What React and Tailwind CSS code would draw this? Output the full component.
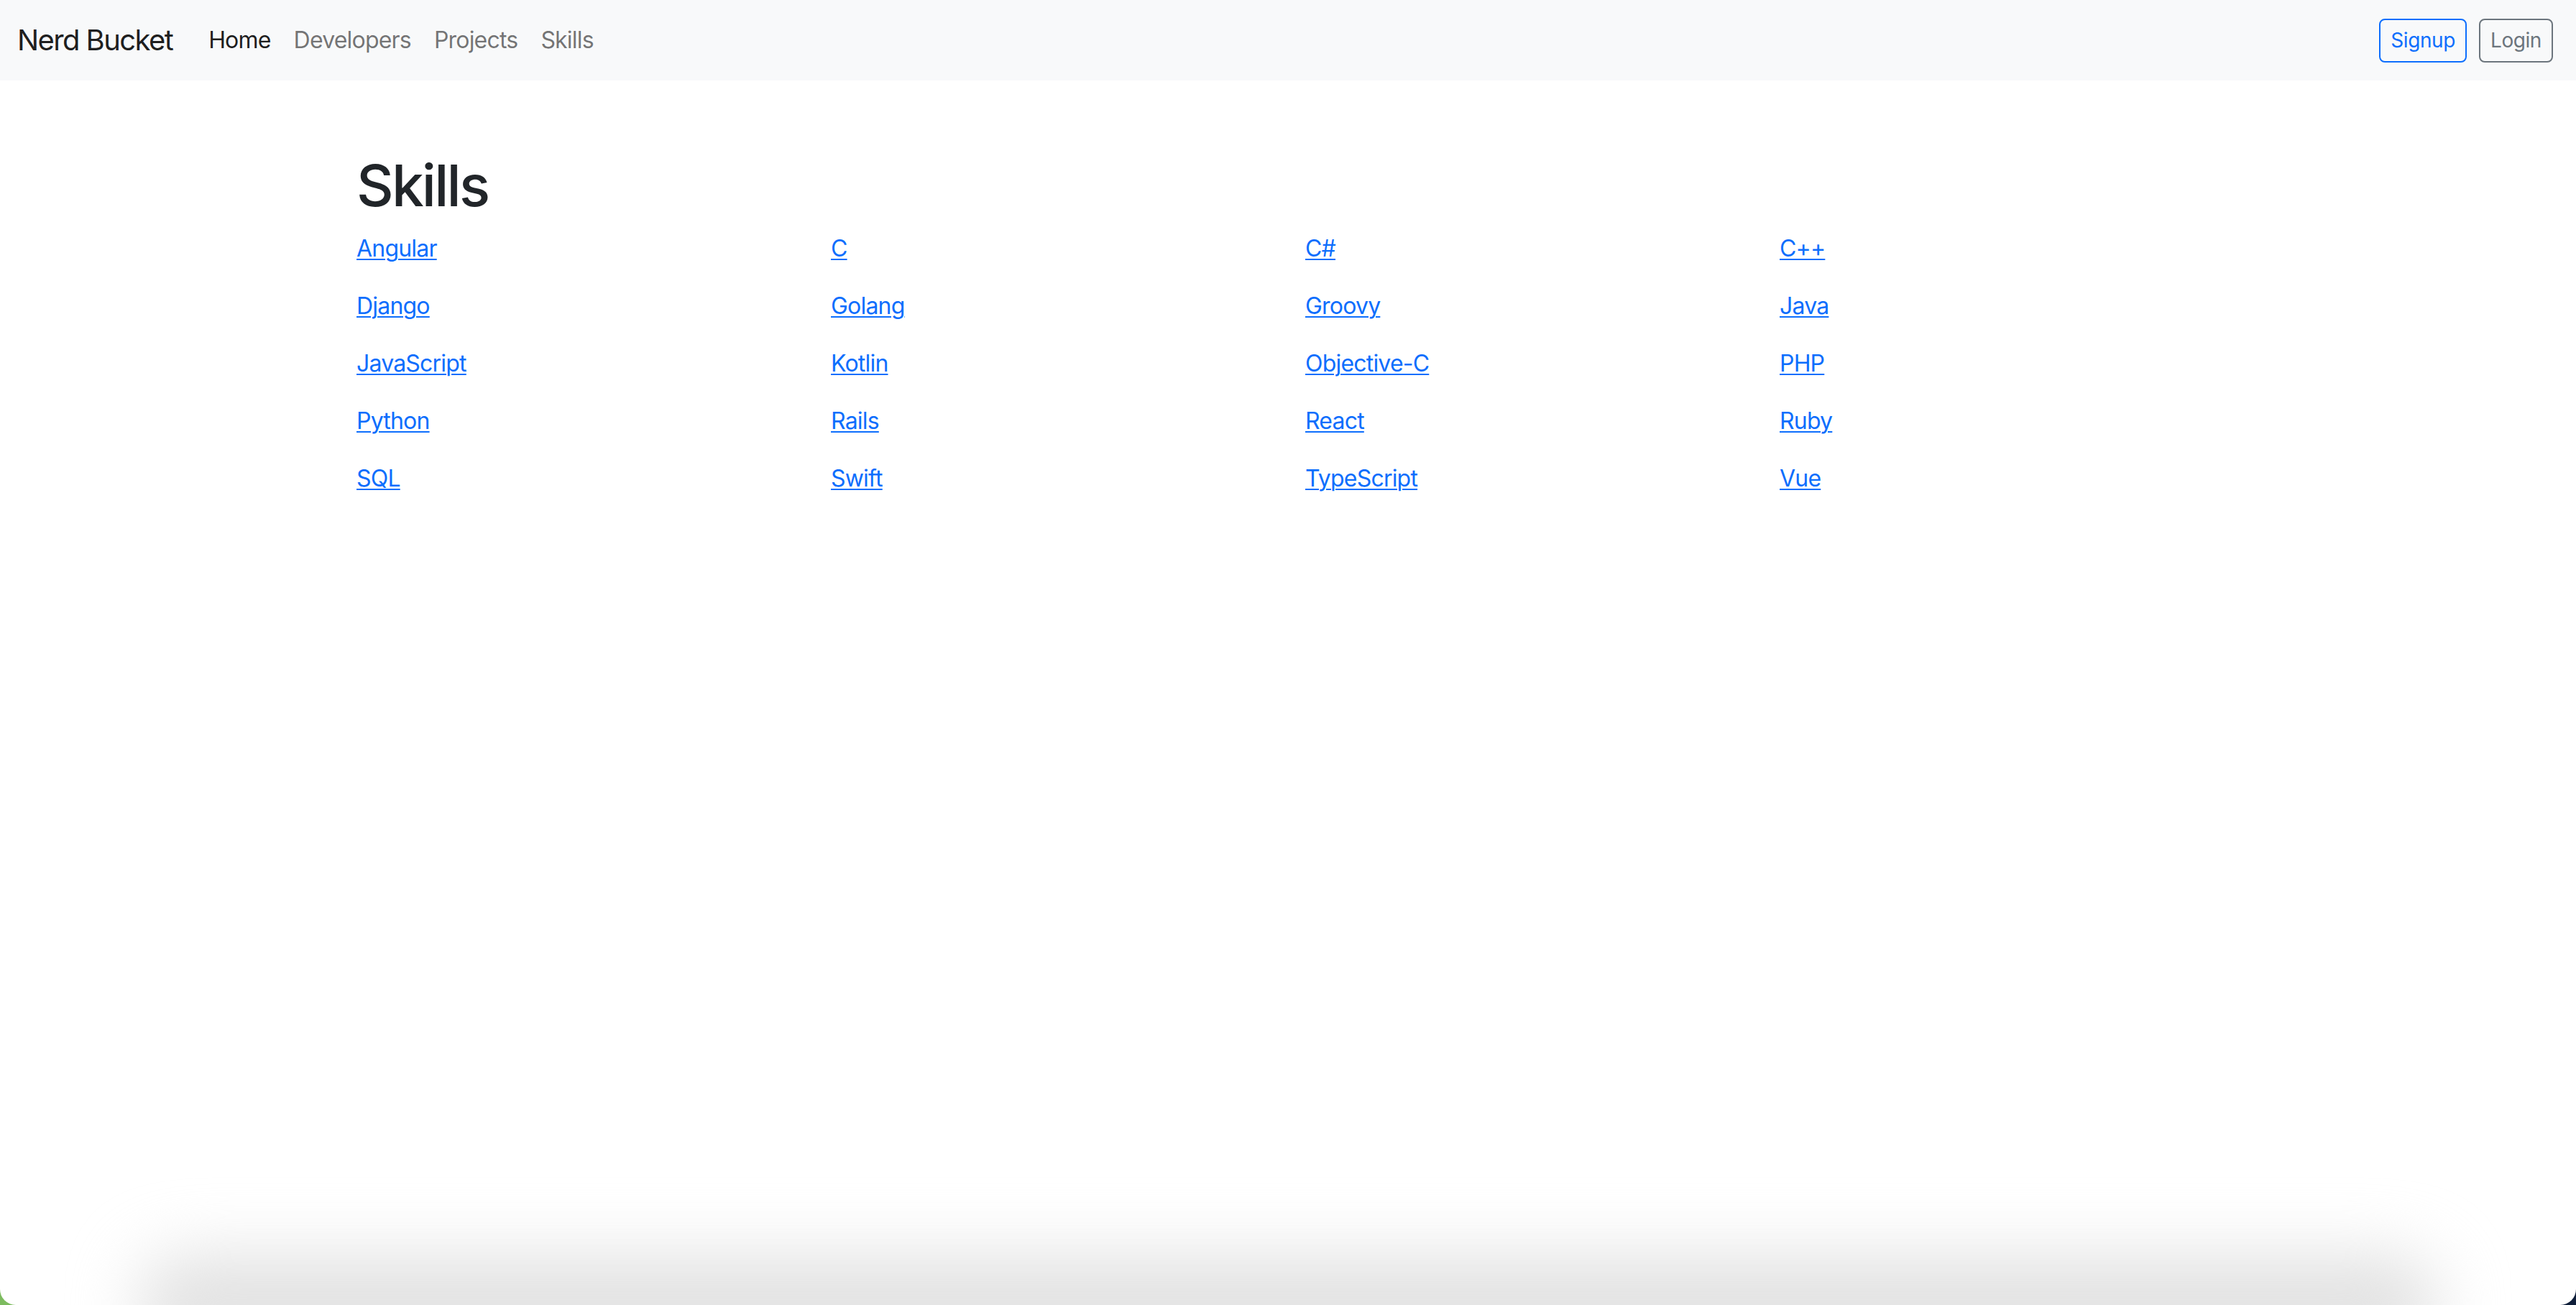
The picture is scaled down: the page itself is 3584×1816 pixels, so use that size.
import React from 'react'

const skills = [
  'Angular', 'C', 'C#', 'C++',
  'Django', 'Golang', 'Groovy', 'Java',
  'JavaScript', 'Kotlin', 'Objective-C', 'PHP',
  'Python', 'Rails', 'React', 'Ruby',
  'SQL', 'Swift', 'TypeScript', 'Vue',
]

const font = { fontFamily: 'Inter, "Noto Sans", sans-serif' }

export default function App() {
  return (
    <div className="h-[1816px] bg-[linear-gradient(90deg,#7dbb5f_0%,#7dbb5f_50%,#0f1f3a_50%,#0f1f3a_100%)]">
      <div
        className="relative h-full overflow-hidden rounded-b-[22px] bg-white text-[#212529]"
        style={font}
      >
        {/* Navbar */}
        <nav className="flex h-[112px] items-center justify-between bg-[#f8f9fa] pl-[24px] pr-[32px]">
          <div className="flex items-center">
            <a href="#" className="mr-[34px] py-[10px] text-[40px] leading-[1.5] text-black/90 tracking-[-0.04em]">
              Nerd Bucket
            </a>
            <ul className="flex items-center text-[32px] leading-[1.5] tracking-[-0.025em]">
              <li><a href="#" className="block px-[16px] py-[16px] text-black/90">Home</a></li>
              <li><a href="#" className="block px-[16px] py-[16px] text-black/55">Developers</a></li>
              <li><a href="#" className="block px-[16px] py-[16px] text-black/55">Projects</a></li>
              <li><a href="#" className="block px-[16px] py-[16px] text-black/55">Skills</a></li>
            </ul>
          </div>
          <div className="flex items-center gap-[17px]">
            <button className="h-[61px] rounded-[8px] border-2 border-[#0d6efd] px-[14px] text-[28px] leading-[1.5] text-[#0d6efd] tracking-[-0.015em]">
              Signup
            </button>
            <button className="h-[61px] rounded-[8px] border-2 border-[#6c757d] px-[14px] text-[28px] leading-[1.5] text-[#6c757d] tracking-[-0.015em]">
              Login
            </button>
          </div>
        </nav>

        {/* Content */}
        <main className="mx-auto mt-[98px] w-[2640px]">
          <h1 className="mb-[16px] px-[24px] text-[80px] font-medium leading-[1.2] tracking-[-0.035em]">Skills</h1>
          <div className="grid grid-cols-4">
            {skills.map((s) => (
              <p key={s} className="mb-[32px] px-[24px] text-[32px] leading-[48px] tracking-[-0.025em]">
                <a href="#" className="text-[#0d6efd] underline decoration-2 underline-offset-[3px]">{s}</a>
              </p>
            ))}
          </div>
        </main>

        {/* shadow from window below */}
        <div className="pointer-events-none absolute bottom-[-70px] left-[190px] right-[190px] h-[140px] rounded-full bg-[#e2e2e2] blur-[45px]" />
      </div>
    </div>
  )
}
